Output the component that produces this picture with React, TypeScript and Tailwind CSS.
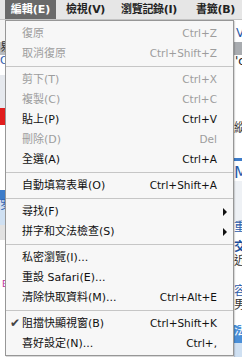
import { useState } from 'react'

type Item =
  | { sep: true }
  | { sep?: false; label: string; key?: string; off?: boolean; sub?: boolean; check?: boolean }

const items: Item[] = [
  { label: '復原', key: 'Ctrl+Z', off: true },
  { label: '取消復原', key: 'Ctrl+Shift+Z', off: true },
  { sep: true },
  { label: '剪下(T)', key: 'Ctrl+X', off: true },
  { label: '複製(C)', key: 'Ctrl+C', off: true },
  { label: '貼上(P)', key: 'Ctrl+V' },
  { label: '刪除(D)', key: 'Del', off: true },
  { label: '全選(A)', key: 'Ctrl+A' },
  { sep: true },
  { label: '自動填寫表單(O)', key: 'Ctrl+Shift+A' },
  { sep: true },
  { label: '尋找(F)', sub: true },
  { label: '拼字和文法檢查(S)', sub: true },
  { sep: true },
  { label: '私密瀏覽(I)...' },
  { label: '重設 Safari(E)...' },
  { label: '清除快取資料(M)...', key: 'Ctrl+Alt+E' },
  { sep: true },
  { label: '阻擋快顯視窗(B)', key: 'Ctrl+Shift+K', check: true },
  { label: '喜好設定(N)...', key: 'Ctrl+,' },
]

const font = { fontFamily: '"DejaVu Sans", "Noto Sans CJK TC", sans-serif' }

export default function App() {
  const [open] = useState(true)

  return (
    <div className="relative w-[242px] h-[357px] overflow-hidden bg-white" style={font}>
      {/* menu bar */}
      <div className="flex h-[20px] items-center bg-[#e6e6e6] border-b border-[#c4c4c4] text-[11px] font-bold text-[#222] leading-none whitespace-nowrap">
        <div className="ml-[5px] h-full w-[51px] flex items-center justify-center bg-[#6a6a6a] text-white">編輯(E)</div>
        <div className="ml-[10px] w-[55px] tracking-[-0.3px]">檢視(V)</div>
        <div className="w-[75px] tracking-[-0.3px]">瀏覽記錄(I)</div>
        <div className="tracking-[-0.3px]">書籤(B)</div>
      </div>

      {/* page behind the menu */}
      <div className="flex h-[337px]">
        <div className="w-[5px] flex flex-col text-[11px] leading-none overflow-hidden">
          <div className="h-[22px] bg-[#f4f4f4]" />
          <div className="h-[13px] bg-[#b9bcc0] text-[#333]">易</div>
          <div className="h-[20px] bg-white text-[#3060b0]">O</div>
          <div className="h-[33px] bg-[#e6e9ee]" />
          <div className="h-[17px] bg-[#e11d1d]" />
          <div className="h-[65px] bg-white" />
          <div className="h-[10px] bg-[#3d7cc9]" />
          <div className="h-[25px] bg-[#cfe0f2] text-[#3060b0]">罗</div>
          <div className="h-[15px] bg-[#e2e2e2]" />
          <div className="h-[40px] bg-white" />
          <div className="h-[12px] bg-white text-[9px] text-[#c0309a] pl-[2px]">E</div>
          <div className="flex-1 bg-white" />
        </div>
        <div className="flex-1" />
        <div className="w-[8px] flex flex-col text-[12px] leading-none overflow-hidden">
          <div className="h-[22px] bg-white text-[#2a5aa8] pt-[7px] pl-[2px]">V</div>
          <div className="h-[13px] bg-[#a9acb0]" />
          <div className="h-[12px] bg-white text-[#222] pl-[1px]">'c</div>
          <div className="h-[55px] bg-white" />
          <div className="h-[18px] bg-white text-[#333]">縱</div>
          <div className="h-[18px] bg-white" />
          <div className="h-[3px] bg-[#3d7cc9]" />
          <div className="h-[20px] bg-white text-[#2a5aa8] text-[16px] pt-[4px]">M</div>
          <div className="h-[40px] bg-[#eef1f5]" />
          <div className="h-[20px] bg-white text-[#2a5aa8]">重</div>
          <div className="h-[14px] bg-white text-[#1b4f9c] font-bold">交</div>
          <div className="h-[30px] bg-white text-[#333]">近</div>
          <div className="h-[14px] bg-white text-[#2a5aa8]">容</div>
          <div className="h-[26px] bg-white text-[#333]">男</div>
          <div className="h-[18px] bg-[#4a8fd8] text-white">法</div>
          <div className="flex-1 bg-[#cfe0f2]" />
        </div>
      </div>

      {/* dropdown menu */}
      {open && (
        <div className="absolute left-[5px] top-[20px] w-[229px] h-[336px] border border-[#979797] bg-[#f7f7f7] pt-[2px] shadow-[1px_1px_1px_rgba(0,0,0,0.15)]">
          {items.map((it, i) =>
            it.sep ? (
              <div key={i} className="h-[6px] flex items-center">
                <div className="h-px w-full bg-[#c6c6c6]" />
              </div>
            ) : (
              <div
                key={i}
                className={`relative h-[20px] flex items-center justify-between pl-[16px] pr-[16px] leading-none ${it.off ? 'text-[#9d9d9d]' : 'text-[#111]'}`}
              >
                {it.check && <span className="absolute left-[4px] top-[4px] text-[12px] text-[#444]">✔</span>}
                <span className="text-[11px]">{it.label}</span>
                {it.key && <span className="text-[10.5px]">{it.key}</span>}
                {it.sub && (
                  <span className="absolute right-[6px] top-[7px] w-0 h-0 border-y-[4px] border-y-transparent border-l-[4px] border-l-[#111]" />
                )}
              </div>
            )
          )}
        </div>
      )}
    </div>
  )
}
